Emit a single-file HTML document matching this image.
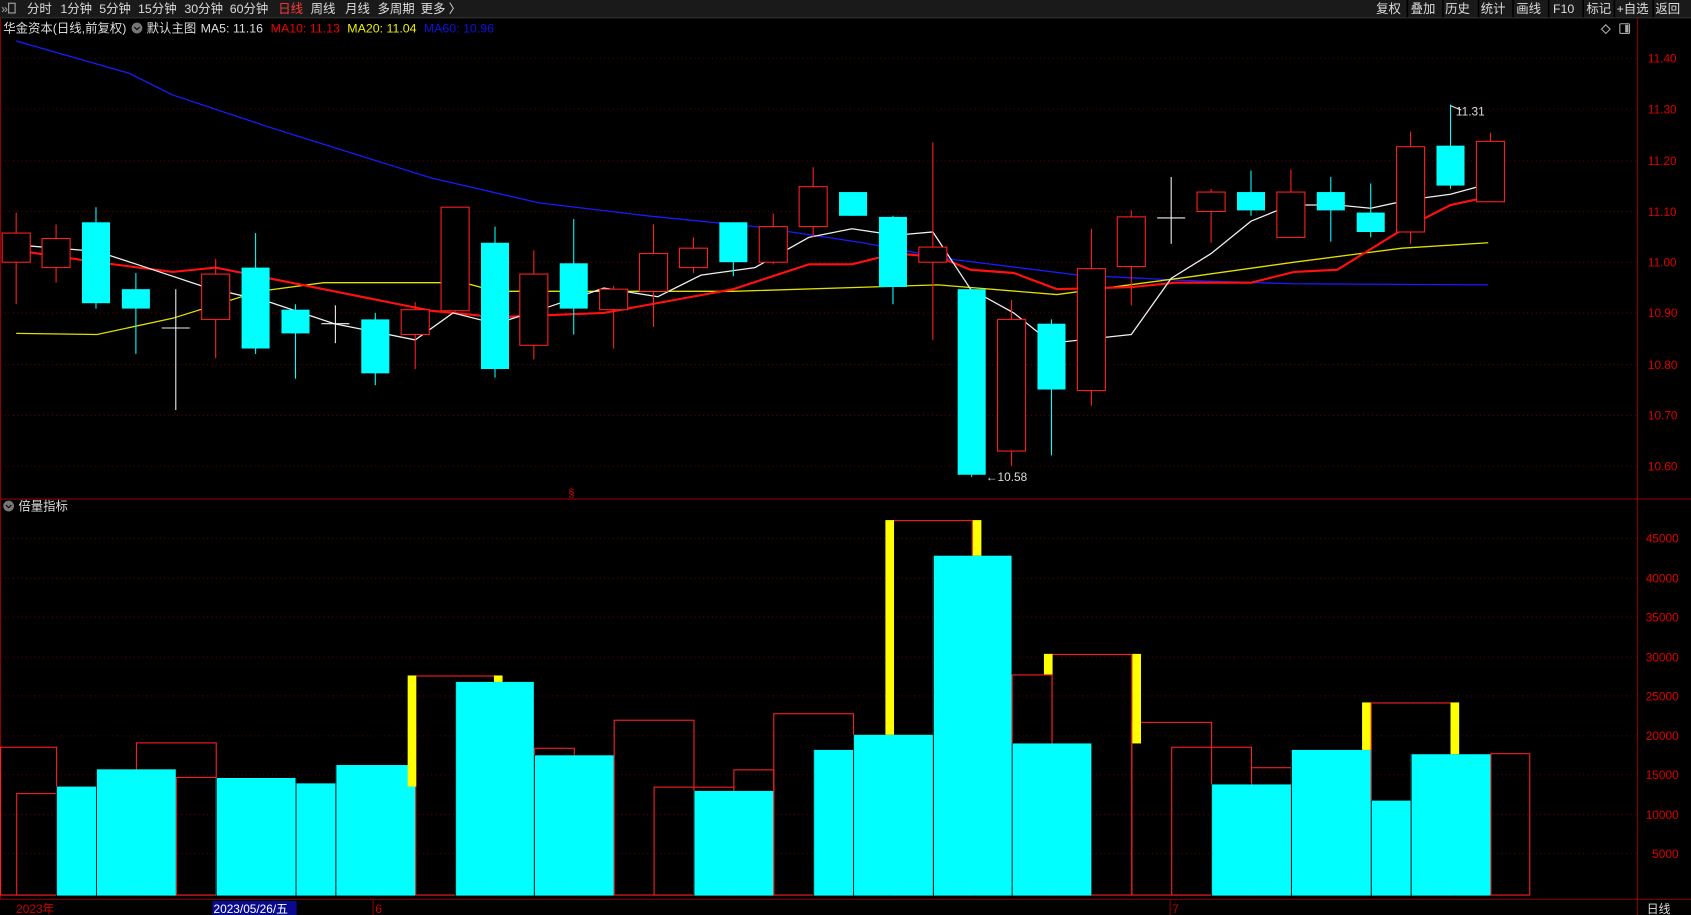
<!DOCTYPE html>
<html><head><meta charset="utf-8"><style>
html,body{margin:0;padding:0;background:#000;width:1691px;height:915px;overflow:hidden}
svg{display:block}
text{font-family:"Liberation Sans","Noto Sans CJK SC",sans-serif}
</style></head><body>
<svg width="1691" height="915" viewBox="0 0 1568 848" preserveAspectRatio="none">
<rect width="1568" height="848" fill="#000"/>
<rect x="0" y="0" width="1568" height="16" fill="#1a1a1a"/>
<line x1="0" y1="16.5" x2="1568" y2="16.5" stroke="#333"/>
<g font-size="11.5" fill="#ddd">
<text x="1" y="12" fill="#aaa">»</text><rect x="8" y="3" width="6" height="9" fill="none" stroke="#aaa"/>
<text x="25" y="12">分时</text><text x="56" y="12">1分钟</text><text x="92" y="12">5分钟</text><text x="128" y="12">15分钟</text><text x="171" y="12">30分钟</text><text x="213" y="12">60分钟</text>
<text x="258" y="12" fill="#ff3b3b">日线</text><text x="288" y="12">周线</text><text x="320" y="12">月线</text><text x="350" y="12">多周期</text><text x="390" y="12">更多 〉</text>
<text x="1276" y="12">复权</text><text x="1308" y="12">叠加</text><text x="1340" y="12">历史</text><text x="1373" y="12">统计</text><text x="1406" y="12">画线</text><text x="1440" y="12">F10</text><text x="1471" y="12">标记</text><text x="1499" y="12">+自选</text><text x="1535" y="12">返回</text>
</g>
<g stroke="#000" stroke-width="1.5"><line x1="1371" y1="0" x2="1371" y2="16"/><line x1="1305" y1="0" x2="1305" y2="16"/><line x1="1338" y1="0" x2="1338" y2="16"/><line x1="1403" y1="0" x2="1403" y2="16"/><line x1="1436" y1="0" x2="1436" y2="16"/><line x1="1468" y1="0" x2="1468" y2="16"/><line x1="1497" y1="0" x2="1497" y2="16"/><line x1="1533" y1="0" x2="1533" y2="16"/></g>
<g font-size="11.5">
<text x="3" y="30" fill="#ddd">华金资本(日线,前复权)</text>
<circle cx="127" cy="26" r="5" fill="#777"/><path d="M124.5 25l2.5 2.5 2.5-2.5" stroke="#000" fill="none"/>
<text x="136" y="30" fill="#ddd">默认主图</text>
<text x="186" y="30" fill="#ddd">MA5: 11.16</text>
<text x="251" y="30" fill="#e00">MA10: 11.13</text>
<text x="322" y="30" fill="#ee0">MA20: 11.04</text>
<text x="393" y="30" fill="#11d">MA60: 10.96</text>
</g>
<path d="M1489 23l4 4-4 4-4-4z" fill="none" stroke="#aaa"/>
<rect x="1502" y="22" width="9" height="9" rx="1" fill="none" stroke="#aaa"/><rect x="1507" y="23" width="3" height="7" fill="#aaa"/>
<g stroke="#5a0000" stroke-dasharray="1 3">
<line x1="0" y1="54" x2="1518" y2="54"/><line x1="0" y1="101" x2="1518" y2="101"/><line x1="0" y1="149" x2="1518" y2="149"/><line x1="0" y1="196" x2="1518" y2="196"/><line x1="0" y1="243" x2="1518" y2="243"/><line x1="0" y1="290" x2="1518" y2="290"/><line x1="0" y1="338" x2="1518" y2="338"/><line x1="0" y1="385" x2="1518" y2="385"/><line x1="0" y1="432" x2="1518" y2="432"/>
<line x1="0" y1="499" x2="1518" y2="499"/><line x1="0" y1="536" x2="1518" y2="536"/><line x1="0" y1="572" x2="1518" y2="572"/><line x1="0" y1="609" x2="1518" y2="609"/><line x1="0" y1="645" x2="1518" y2="645"/><line x1="0" y1="682" x2="1518" y2="682"/><line x1="0" y1="718" x2="1518" y2="718"/><line x1="0" y1="755" x2="1518" y2="755"/><line x1="0" y1="791" x2="1518" y2="791"/>
</g>
<g stroke="#8b0000" fill="none">
<line x1="1518.5" y1="17" x2="1518.5" y2="848"/>
<line x1="0" y1="462.5" x2="1568" y2="462.5"/>
<line x1="0" y1="833.5" x2="1568" y2="833.5"/>
<line x1="0.5" y1="17" x2="0.5" y2="833"/>
</g>
<g font-size="11" fill="#d00">
<text x="1528" y="58">11.40</text><text x="1528" y="105">11.30</text><text x="1528" y="153">11.20</text><text x="1528" y="200">11.10</text><text x="1528" y="247">11.00</text><text x="1528" y="294">10.90</text><text x="1528" y="342">10.80</text><text x="1528" y="389">10.70</text><text x="1528" y="436">10.60</text>
<text x="1526" y="503">45000</text><text x="1526" y="540">40000</text><text x="1526" y="576">35000</text><text x="1526" y="613">30000</text><text x="1526" y="649">25000</text><text x="1526" y="686">20000</text><text x="1526" y="722">15000</text><text x="1526" y="759">10000</text><text x="1532" y="795">5000</text>
</g>
<g fill="none" stroke-width="1.2">
<polyline stroke="#1a1aff" points="15,38 120,68 160,88 250,118 400,165 500,188 600,200 700,210 800,225 880,240 1000,255 1100,260 1200,263 1380,264"/>
<polyline stroke="#e0e000" points="15,309 90,310 160,295 240,270 300,262 430,262 460,270 560,270 680,270 870,264 980,273 1100,257 1200,243 1300,230 1380,225"/>
<polyline stroke="#ff1010" stroke-width="2" points="15,232 90,243 160,252 200,248 300,268 400,288 460,294 560,290 680,268 750,245 790,245 830,235 870,238 900,250 940,253 980,268 1050,266 1090,262 1160,262 1200,252 1240,250 1300,213 1345,190 1382,182"/>
<polyline stroke="#eee" points="15,227 90,233 130,246 190,266 250,280 310,300 385,315 420,290 460,300 510,284 560,267 610,275 650,255 700,248 750,220 790,212 830,218 865,215 900,268 940,290 975,318 1049,310 1086,258 1123,235 1160,205 1197,190 1240,190 1271,193 1308,185 1345,180 1382,170"/>
</g>
<g id="c"></g>
<text x="914" y="446" font-size="11" fill="#ddd">←10.58</text>
<text x="1350" y="107" font-size="11" fill="#ddd">11.31</text><path d="M1345 98l10 4" stroke="#ddd"/>
<text x="527" y="460" font-size="10" fill="#e00">§</text>
<circle cx="8" cy="469" r="5" fill="#777"/><path d="M5.5 468l2.5 2.5 2.5-2.5" stroke="#000" fill="none"/>
<text x="17" y="473" font-size="11.5" fill="#ddd">倍量指标</text>
<g id="v"></g>
<g font-size="11">
<text x="15" y="846" fill="#c00">2023年</text>
<rect x="197" y="835" width="78" height="13" fill="#0a0a90"/><text x="198" y="846" fill="#fff">2023/05/26/五</text>
<text x="348" y="846" fill="#c00">6</text><text x="1087" y="846" fill="#c00">7</text>
<text x="1527" y="846" fill="#ddd">日线</text>
</g>
<g stroke="#8b0000"><line x1="346" y1="834" x2="346" y2="848"/><line x1="1085" y1="834" x2="1085" y2="848"/></g>
</svg>
<script>
var ns="http://www.w3.org/2000/svg";
function el(p,t,a){var e=document.createElementNS(ns,t);for(var k in a)e.setAttribute(k,a[k]);p.appendChild(e);return e;}
var C=[[15,'r',216,243,197,282],[52,'r',221,248,208,262],[89,'c',206,281,192,286],[126,'c',268,286,253,328],[163,'w',304,304,268,380],[200,'r',254,296,240,332],[237,'c',248,323,216,328],[274,'c',287,309,282,351],[311,'w',300,300,283,318],[348,'c',296,346,290,357],[385,'r',287,310,280,342],[422,'r',192,288,192,290],[459,'c',225,342,210,350],[495,'r',254,320,232,333],[532,'c',244,286,203,310],[569,'r',268,287,265,323],[606,'r',235,270,208,303],[643,'r',230,248,220,253],[680,'c',206,243,206,256],[717,'r',210,243,198,245],[754,'r',173,210,155,220],[791,'c',178,200,178,200],[828,'c',201,266,200,282],[865,'r',229,243,132,315],[901,'c',268,440,268,442],[938,'r',296,418,278,432],[975,'c',300,361,296,422],[1012,'r',249,362,212,376],[1049,'r',201,247,195,283],[1086,'w',202,202,164,226],[1123,'r',178,196,175,225],[1160,'c',178,195,158,200],[1197,'r',178,220,157,220],[1234,'c',178,195,164,224],[1271,'c',197,215,170,220],[1308,'r',136,215,122,226],[1345,'c',135,172,97,175],[1382,'r',131,187,123,187]];
var g=document.getElementById('c');
C.forEach(function(c){var x=c[0],col=c[1]=='r'?'#ff2020':c[1]=='c'?'#00ffff':'#eee';
el(g,'line',{x1:x,x2:x,y1:c[4],y2:c[5],stroke:col});
if(c[1]=='w'){el(g,'line',{x1:x-13,x2:x+13,y1:c[2],y2:c[2],stroke:col});}
else if(c[1]=='r'){el(g,'rect',{x:x-13,y:c[2],width:26,height:c[3]-c[2],fill:'#000',stroke:col});}
else el(g,'rect',{x:x-13,y:c[2],width:26,height:c[3]-c[2],fill:col});});
var v=document.getElementById('v'),B=829;
[[0,52,692],[15,52,735],[126,200,688],[163,200,720],[385,460,626],[495,532,693],[569,643,667],[606,680,729],[680,717,713],[717,791,661],[828,901,482],[938,975,625],[975,1049,606],[1049,1123,669],[1086,1160,692],[1160,1197,711],[1271,1345,651],[1382,1418,698]].forEach(function(b){el(v,'rect',{x:b[0]+.5,y:b[2]+.5,width:b[1]-b[0],height:B-b[2],fill:'none',stroke:'#ff2020'});});
[[52,89,729],[89,163,713],[200,274,721],[274,311,726],[311,385,709],[422,495,632],[495,569,700],[643,717,733],[754,791,695],[791,865,681],[865,938,515],[938,1012,689],[1123,1197,727],[1197,1271,695],[1271,1308,742],[1308,1382,699]].forEach(function(b){el(v,'rect',{x:b[0],y:b[2],width:b[1]-b[0],height:B+1-b[2],fill:'#00ffff'});el(v,'line',{x1:b[0]+.5,x2:b[0]+.5,y1:b[2],y2:B+1,stroke:'#000','stroke-width':0.8});});
[[378,626,729],[458,626,632],[821,482,681],[902,482,515],[968,606,625],[1050,606,689],[1263,651,695],[1345,651,699]].forEach(function(b){el(v,'rect',{x:b[0],y:b[1],width:8,height:b[2]-b[1],fill:'#ffff00'});});
</script>
</body></html>
